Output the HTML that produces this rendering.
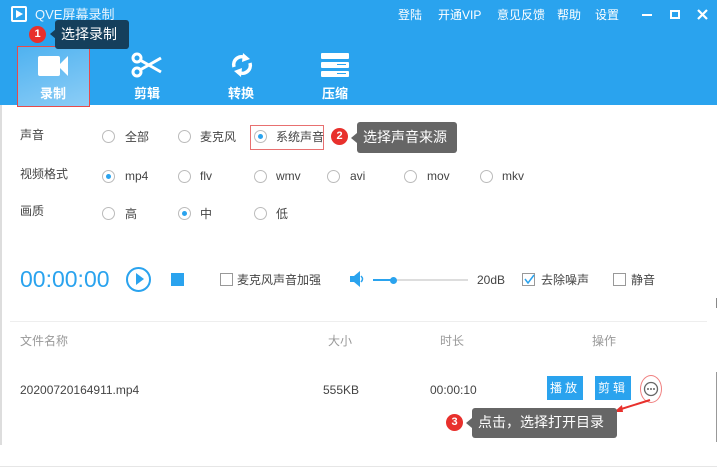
<!DOCTYPE html>
<html><head><meta charset="utf-8"><style>
*{margin:0;padding:0;box-sizing:border-box}
body{width:717px;height:471px;position:relative;background:#fff;font-family:"Liberation Sans","Noto Sans CJK SC",sans-serif;overflow:hidden;color:#333}
.a{position:absolute;white-space:nowrap}
.hdr{position:absolute;left:0;top:0;width:717px;height:105px;background:#2aa3ee}
.t{font-size:12px;color:#444;line-height:14px}
.rad{position:absolute;width:13px;height:13px;border:1px solid #bbb;border-radius:50%;background:#fff}
.rad.on::after{content:"";position:absolute;left:3px;top:3px;width:5px;height:5px;border-radius:50%;background:#2aa3ee}
.nav{font-size:13px;color:#fff;font-weight:bold;line-height:16px}
.cb{position:absolute;width:13px;height:13px;border:1px solid #999;background:#fff}
.badge{position:absolute;width:17px;height:17px;border-radius:50%;background:#e8302c;color:#fff;font-size:11px;font-weight:bold;text-align:center;line-height:17px}
.tip{position:absolute;color:#fff;font-size:14px;border-radius:3px;padding-left:6px}
.btn{position:absolute;background:#2aa3ee;color:#fff;font-size:12px;text-align:center;line-height:24px;letter-spacing:3px}
.g{font-size:12px;color:#999;line-height:14px}
.w{font-size:12px;color:#fff;line-height:14px}
</style></head><body>
<div class="hdr"></div>
<div class="a" style="left:0;top:105px;width:2px;height:340px;background:#ddd"></div>
<div class="a" style="left:11px;top:6px;width:16px;height:16px;border:2px solid #fff;border-radius:2px"></div>
<div class="a" style="left:16px;top:10px;width:0;height:0;border-left:7px solid #fff;border-top:4px solid transparent;border-bottom:4px solid transparent"></div>
<div class="a" style="left:35px;top:7px;font-size:13px;color:#e8f4fd;line-height:15px">QVE屏幕录制</div>
<div class="a w" style="left:398px;top:8px">登陆</div>
<div class="a w" style="left:438px;top:8px">开通VIP</div>
<div class="a w" style="left:497px;top:8px">意见反馈</div>
<div class="a w" style="left:557px;top:8px">帮助</div>
<div class="a w" style="left:595px;top:8px">设置</div>
<div class="a" style="left:642px;top:14px;width:10px;height:2px;background:#fff"></div>
<div class="a" style="left:670px;top:10px;width:10px;height:9px;border:2px solid #fff"></div>
<svg class="a" style="left:697px;top:9px" width="11" height="11"><path d="M1 1L10 10M10 1L1 10" stroke="#fff" stroke-width="2.2"/></svg>
<div class="a" style="left:17px;top:46px;width:73px;height:61px;border:1px solid #e84a4a;background:linear-gradient(160deg,#4fb2f0,#8ccdf6)"></div>
<div class="a" style="left:38px;top:56px;width:22px;height:20px;background:#fff;border-radius:2px"></div>
<div class="a" style="left:58px;top:56px;width:0;height:0;border-right:10px solid #fff;border-top:10px solid transparent;border-bottom:10px solid transparent"></div>
<div class="a nav" style="left:40px;top:86px">录制</div>
<svg class="a" style="left:131px;top:52px" width="34" height="26" viewBox="0 0 34 26"><g fill="none" stroke="#fff" stroke-width="3"><circle cx="6" cy="6" r="4"/><circle cx="6" cy="20" r="4"/><path d="M9 8 L30 20 M9 18 L30 6"/></g></svg>
<div class="a nav" style="left:134px;top:86px">剪辑</div>
<svg class="a" style="left:229px;top:52px" width="26" height="26" viewBox="0 0 26 26"><g fill="none" stroke="#fff" stroke-width="3.5"><path d="M5 15 A8 8 0 0 1 17 6"/><path d="M21 11 A8 8 0 0 1 9 20"/></g><path d="M14 1 L21 7 L13 10Z M12 25 L5 19 L13 16Z" fill="#fff"/></svg>
<div class="a nav" style="left:228px;top:86px">转换</div>
<div class="a" style="left:321px;top:53px;width:28px;height:6px;background:#fff;border-radius:1px"></div>
<div class="a" style="left:321px;top:62px;width:28px;height:6px;background:#fff;border-radius:1px"></div>
<div class="a" style="left:321px;top:71px;width:28px;height:6px;background:#fff;border-radius:1px"></div>
<div class="a" style="left:337px;top:64px;width:9px;height:1px;background:#2aa3ee"></div>
<div class="a" style="left:337px;top:73px;width:9px;height:1px;background:#2aa3ee"></div>
<div class="a nav" style="left:322px;top:86px">压缩</div>
<div class="badge" style="left:29px;top:26px">1</div>
<div class="a" style="left:50px;top:29px;border-right:6px solid #153f5c;border-top:5px solid transparent;border-bottom:5px solid transparent"></div>
<div class="tip" style="left:55px;top:20px;width:74px;height:29px;background:#153f5c;line-height:28px">选择录制</div>
<div class="a t" style="left:20px;top:128px">声音</div>
<div class="rad" style="left:102px;top:130px"></div><div class="a t" style="left:125px;top:130px">全部</div>
<div class="rad" style="left:178px;top:130px"></div><div class="a t" style="left:200px;top:130px">麦克风</div>
<div class="a" style="left:250px;top:125px;width:74px;height:25px;border:1px solid #e87070"></div>
<div class="rad on" style="left:254px;top:130px"></div><div class="a t" style="left:276px;top:130px">系统声音</div>
<div class="badge" style="left:331px;top:128px">2</div>
<div class="a" style="left:351px;top:133px;border-right:6px solid #666;border-top:5px solid transparent;border-bottom:5px solid transparent"></div>
<div class="tip" style="left:357px;top:122px;width:100px;height:31px;background:#666;line-height:30px">选择声音来源</div>
<div class="a t" style="left:20px;top:167px">视频格式</div>
<div class="rad on" style="left:102px;top:170px"></div><div class="a t" style="left:125px;top:169px">mp4</div>
<div class="rad" style="left:178px;top:170px"></div><div class="a t" style="left:200px;top:169px">flv</div>
<div class="rad" style="left:254px;top:170px"></div><div class="a t" style="left:276px;top:169px">wmv</div>
<div class="rad" style="left:327px;top:170px"></div><div class="a t" style="left:350px;top:169px">avi</div>
<div class="rad" style="left:404px;top:170px"></div><div class="a t" style="left:427px;top:169px">mov</div>
<div class="rad" style="left:480px;top:170px"></div><div class="a t" style="left:502px;top:169px">mkv</div>
<div class="a t" style="left:20px;top:204px">画质</div>
<div class="rad" style="left:102px;top:207px"></div><div class="a t" style="left:125px;top:207px">高</div>
<div class="rad on" style="left:178px;top:207px"></div><div class="a t" style="left:200px;top:207px">中</div>
<div class="rad" style="left:254px;top:207px"></div><div class="a t" style="left:276px;top:207px">低</div>
<div class="a" style="left:20px;top:266px;font-size:23px;color:#2aa3ee;line-height:27px">00:00:00</div>
<div class="a" style="left:126px;top:267px;width:25px;height:25px;border:2.5px solid #2aa3ee;border-radius:50%"></div>
<div class="a" style="left:136px;top:273px;border-left:8px solid #2aa3ee;border-top:6px solid transparent;border-bottom:6px solid transparent"></div>
<div class="a" style="left:171px;top:273px;width:13px;height:13px;background:#2aa3ee"></div>
<div class="cb" style="left:220px;top:273px"></div><div class="a t" style="left:237px;top:273px">麦克风声音加强</div>
<svg class="a" style="left:350px;top:271px" width="14" height="16" viewBox="0 0 14 16"><path d="M0 5H4L10 0V16L4 11H0Z" fill="#2aa3ee"/><path d="M11 5 Q14 8 11 11" stroke="#2aa3ee" stroke-width="1.5" fill="none"/></svg>
<div class="a" style="left:373px;top:279px;width:95px;height:2px;background:#ddd"></div>
<div class="a" style="left:373px;top:279px;width:20px;height:2px;background:#2aa3ee"></div>
<div class="a" style="left:390px;top:277px;width:7px;height:7px;border-radius:50%;background:#2aa3ee"></div>
<div class="a t" style="left:477px;top:273px">20dB</div>
<div class="cb" style="left:522px;top:273px"></div>
<svg class="a" style="left:524px;top:274px" width="11" height="11"><path d="M1 5L4 9L10 1" stroke="#2aa3ee" stroke-width="1.5" fill="none"/></svg>
<div class="a t" style="left:541px;top:273px">去除噪声</div>
<div class="cb" style="left:613px;top:273px"></div><div class="a t" style="left:631px;top:273px">静音</div>
<div class="a" style="left:10px;top:321px;width:697px;height:1px;background:#eee"></div>
<div class="a g" style="left:20px;top:334px">文件名称</div>
<div class="a g" style="left:328px;top:334px">大小</div>
<div class="a g" style="left:440px;top:334px">时长</div>
<div class="a g" style="left:592px;top:334px">操作</div>
<div class="a t" style="left:20px;top:383px">20200720164911.mp4</div>
<div class="a t" style="left:323px;top:383px">555KB</div>
<div class="a t" style="left:430px;top:383px">00:00:10</div>
<div class="btn" style="left:547px;top:376px;width:36px;height:24px">播放</div>
<div class="btn" style="left:595px;top:376px;width:36px;height:24px">剪辑</div>
<div class="a" style="left:640px;top:375px;width:22px;height:28px;border:1px solid #f08080;border-radius:50%"></div>
<svg class="a" style="left:643px;top:381px" width="16" height="16"><circle cx="8" cy="8" r="6.5" stroke="#666" stroke-width="1.3" fill="none"/><circle cx="5" cy="8" r="1" fill="#666"/><circle cx="8" cy="8" r="1" fill="#666"/><circle cx="11" cy="8" r="1" fill="#666"/></svg>
<svg class="a" style="left:612px;top:398px" width="40" height="16"><path d="M38 2 L6 12" stroke="#e8302c" stroke-width="2"/><path d="M2 14 L10 7 L11 14Z" fill="#e8302c"/></svg>
<div class="badge" style="left:446px;top:414px">3</div>
<div class="a" style="left:466px;top:418px;border-right:6px solid #666;border-top:5px solid transparent;border-bottom:5px solid transparent"></div>
<div class="tip" style="left:472px;top:408px;width:145px;height:30px;background:#666;line-height:29px">点击，选择打开目录</div>
<div class="a" style="left:0;top:466px;width:717px;height:1px;background:#e6e6e6"></div>
<div class="a" style="left:716px;top:298px;width:1px;height:10px;background:#888"></div>
<div class="a" style="left:716px;top:372px;width:1px;height:70px;background:#999"></div>
</body></html>
